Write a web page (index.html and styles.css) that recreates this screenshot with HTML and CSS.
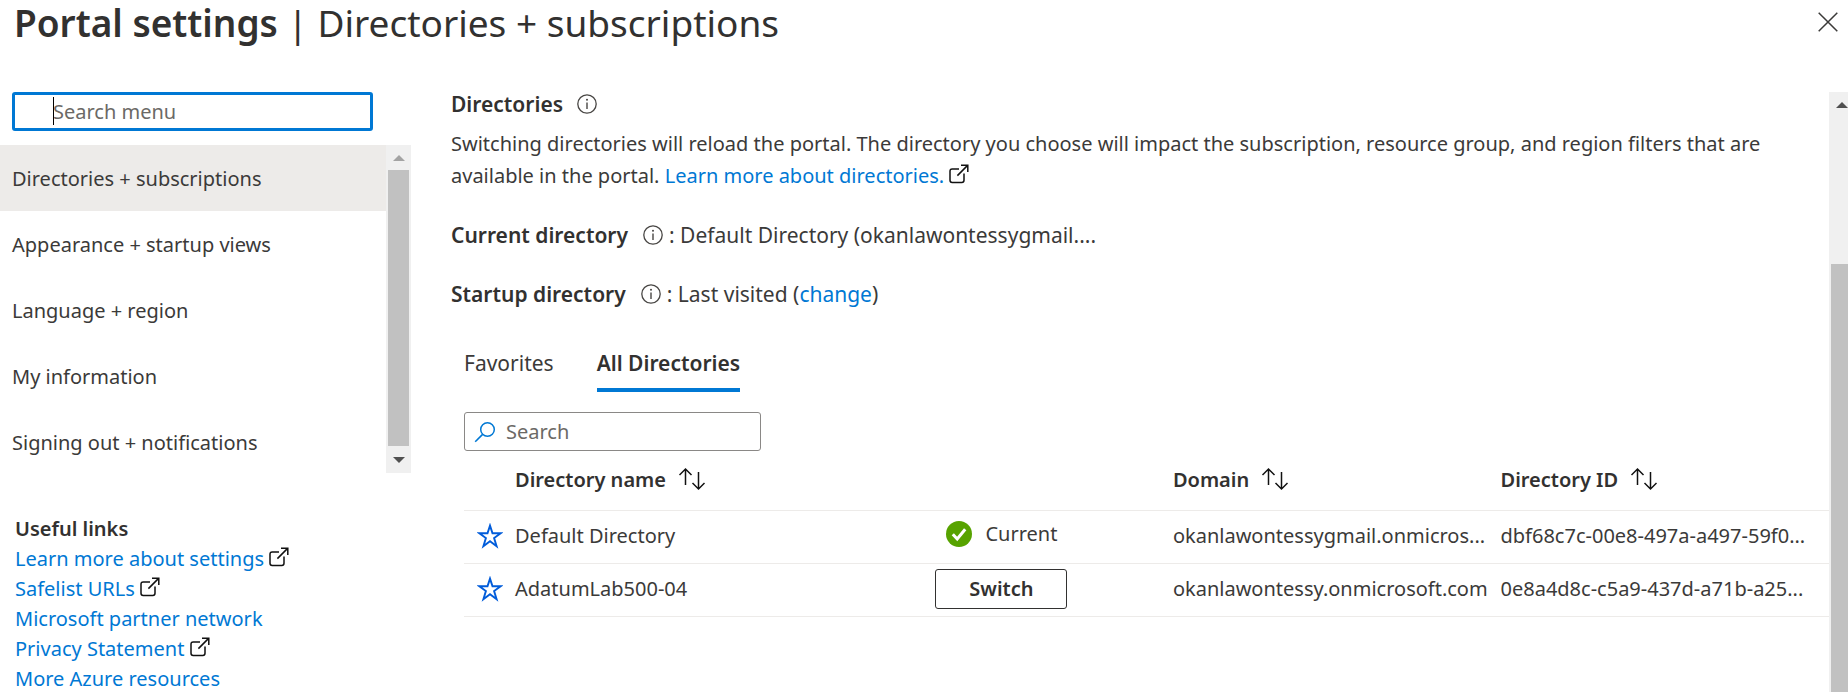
FILE: index.html
```html
<!DOCTYPE html>
<html lang="en">
<head>
<meta charset="utf-8">
<title>Portal settings</title>
<link rel="stylesheet" href="styles.css">
</head>
<body>
<svg class="sprite" aria-hidden="true">
  <symbol id="info" viewBox="0 0 20 20"><circle cx="10" cy="10" r="9.2" fill="none" stroke="currentColor" stroke-width="1.3"/><path d="M10 8.4V15" stroke="currentColor" stroke-width="1.4"/><circle cx="10" cy="5.8" r="1" fill="currentColor"/></symbol>
  <symbol id="external" viewBox="0 0 20 20"><path d="M10 5H3.2Q1 5 1 7.2V16.2Q1 18.4 3.2 18.4H12.8Q15 18.4 15 16.2V9.6M8.4 11.6L18.6 1.4M12 1.2H18.8V8" fill="none" stroke="currentColor" stroke-width="1.5"/></symbol>
  <symbol id="sort" viewBox="0 0 28 24"><path d="M7.5 18V2M1.5 8L7.5 2L13.5 8M20.5 5V22M14.5 16L20.5 22L26.500 16" fill="none" stroke="currentColor" stroke-width="1.5"/></symbol>
  <symbol id="star" viewBox="0 0 26 26"><path d="M13 2.600L15.500 10.300H23.600L17.100 15.100L19.600 23.200L13 18.300L6.400 23.200L8.900 15.100L2.400 10.300H10.500Z" fill="none" stroke="currentColor" stroke-width="1.900"/></symbol>
</svg>
<header class="header">
  <h1 class="title"><strong>Portal settings</strong> | Directories + subscriptions</h1>
  <button class="close" type="button" aria-label="Close"><svg viewBox="0 0 20 20"><path d="M.7.7L19.300 19.300M19.300.7L.7 19.300" stroke="currentColor" stroke-width="1.5"/></svg></button>
</header>
<div class="layout">
  <aside class="sidebar">
    <div class="menu-search">
      <input class="menu-input" type="text" placeholder="Search menu" aria-label="Search menu">
      <span class="caret"></span>
    </div>
    <div class="menu-wrap">
      <nav class="menu" aria-label="Settings">
        <a class="menu-item selected" href="#" aria-current="page">Directories + subscriptions</a>
        <a class="menu-item" href="#">Appearance + startup views</a>
        <a class="menu-item" href="#">Language + region</a>
        <a class="menu-item" href="#">My information</a>
        <a class="menu-item" href="#">Signing out + notifications</a>
      </nav>
      <div class="scrollbar menu-scroll" aria-hidden="true">
        <svg class="arrow faint" viewBox="0 0 12 6"><path d="M0 6L6 0L12 6Z"/></svg>
        <span class="thumb"></span>
        <svg class="arrow" viewBox="0 0 12 6"><path d="M0 0L6 6L12 0Z"/></svg>
      </div>
    </div>
    <section class="useful">
      <h2 class="useful-title">Useful links</h2>
      <ul class="links">
        <li><a href="#">Learn more about settings</a> <svg class="icon"><use href="#external"/></svg></li>
        <li><a href="#">Safelist URLs</a> <svg class="icon"><use href="#external"/></svg></li>
        <li><a href="#">Microsoft partner network</a></li>
        <li><a href="#">Privacy Statement</a> <svg class="icon"><use href="#external"/></svg></li>
        <li><a href="#">More Azure resources</a></li>
      </ul>
    </section>
  </aside>
  <main class="main">
    <h2 class="heading">Directories <svg class="icon info"><use href="#info"/></svg></h2>
    <p class="intro">Switching directories will reload the portal. The directory you choose will impact the subscription, resource group, and region filters that are available in the portal. <a href="#">Learn more about directories.</a> <svg class="icon"><use href="#external"/></svg></p>
    <p class="fact"><strong>Current directory</strong><svg class="icon info"><use href="#info"/></svg><span>: Default Directory (okanlawontessygmail....</span></p>
    <p class="fact"><strong>Startup directory</strong><svg class="icon info"><use href="#info"/></svg><span>: Last visited (<a href="#">change</a>)</span></p>
    <div class="panel">
      <div class="tabs" role="tablist">
        <button class="tab" type="button" role="tab" aria-selected="false">Favorites</button>
        <button class="tab active" type="button" role="tab" aria-selected="true">All Directories</button>
      </div>
      <label class="search">
        <svg class="lens" viewBox="0 0 22 22"><circle cx="13.500" cy="8.500" r="6.800" fill="none" stroke="currentColor" stroke-width="1.500"/><path d="M8.600 13.400L1.200 20.800" stroke="currentColor" stroke-width="1.600"/></svg>
        <input class="search-input" type="text" placeholder="Search" aria-label="Search">
      </label>
      <table class="grid">
        <colgroup><col class="c-star"><col class="c-name"><col class="c-status"><col class="c-domain"><col class="c-id"></colgroup>
        <thead>
          <tr><th></th><th>Directory name<svg class="sort"><use href="#sort"/></svg></th><th></th><th>Domain<svg class="sort"><use href="#sort"/></svg></th><th>Directory ID<svg class="sort"><use href="#sort"/></svg></th></tr>
        </thead>
        <tbody>
          <tr>
            <td><button class="fav" type="button" aria-label="Favorite Default Directory"><svg class="star"><use href="#star"/></svg></button></td>
            <td>Default Directory</td>
            <td><span class="current"><svg class="check" viewBox="0 0 26 26"><circle cx="13" cy="13" r="13" fill="#57a300"/><path d="M6.800 13.200L11.200 18L19.200 8.200" fill="none" stroke="#fff" stroke-width="3"/></svg>Current</span></td>
            <td>okanlawontessygmail.onmicros...</td>
            <td>dbf68c7c-00e8-497a-a497-59f0...</td>
          </tr>
          <tr>
            <td><button class="fav" type="button" aria-label="Favorite AdatumLab500-04"><svg class="star"><use href="#star"/></svg></button></td>
            <td>AdatumLab500-04</td>
            <td><button class="switch" type="button">Switch</button></td>
            <td>okanlawontessy.onmicrosoft.com</td>
            <td>0e8a4d8c-c5a9-437d-a71b-a25...</td>
          </tr>
        </tbody>
      </table>
    </div>
  </main>
  <div class="scrollbar page-scroll" aria-hidden="true">
    <svg class="arrow" viewBox="0 0 12 6"><path d="M0 6L6 0L12 6Z"/></svg>
    <span class="thumb"></span>
  </div>
</div>
</body>
</html>
```
FILE: styles.css
```css
* { box-sizing: border-box; }

body {
  margin: 0;
  height: 100vh;
  overflow: hidden;
  display: flex;
  flex-direction: column;
  background: #fff;
  color: #3b3a39;
  font-family: "Segoe UI", "Noto Sans", "Open Sans", sans-serif;
  font-size: 20px;
  line-height: 30px;
}

h1, h2, p, ul { margin: 0; padding: 0; }
ul { list-style: none; }
a { color: #0078d4; text-decoration: none; }
h1, h2, th, strong { color: #323130; }
strong, h2, th { font-weight: 600; }
button, input { font: inherit; color: inherit; }
button { padding: 0; border: 0; background: none; }
input::placeholder { color: #6b6966; opacity: 1; }

.sprite { position: absolute; width: 0; height: 0; }
.icon { width: 20px; height: 20px; color: #111; }
.info { color: #484644; }

.header {
  display: flex;
  justify-content: space-between;
  align-items: flex-start;
  height: 92px;
  padding-right: 10px;
  padding-left: 14px;
  flex: none;
}
.title { font-size: 37px; font-weight: 400; line-height: 46px; white-space: nowrap; }
.close { margin-top: 12px; }
.close svg { display: block; width: 20px; height: 20px; }

.layout { display: flex; flex: 1; min-height: 0; }

.sidebar { width: 411px; flex: none; }
.menu-search { position: relative; margin: 0 38px 14px 12px; }
.menu-input {
  display: block;
  width: 100%;
  height: 39px;
  padding: 0 8px 0 38px;
  border: 3px solid #0078d4;
  border-radius: 3px;
  outline: 0;
}
.caret { position: absolute; top: 5px; left: 41px; width: 1px; height: 28px; background: #000; }

.menu-wrap { display: flex; height: 328px; overflow: hidden; }
.menu { flex: 1; }
.menu-item { display: block; padding: 19px 12px 17px; color: #3b3a39; }
.selected { background: #edebe9; }

.scrollbar {
  display: flex;
  flex-direction: column;
  align-items: center;
  flex: none;
  background: #f0f0f0;
}
.thumb { flex: 1; align-self: stretch; margin: 0 2px; background: #c1c1c1; }
.arrow { width: 12px; height: 6px; margin: 10px 0 9px; fill: #505050; }
.faint { fill: #a3a3a3; }
.menu-scroll { width: 25px; }
.menu-scroll .arrow:last-child { margin: 11px 0 10px; }
.page-scroll { width: 19px; overflow: hidden; align-items: flex-end; }
.page-scroll .arrow { margin-bottom: 156px; }
.page-scroll .thumb { margin-right: 0; }

.useful { padding: 41px 15px 0; white-space: nowrap; }
.useful-title { font-size: 20px; line-height: 30px; }
.links .icon { vertical-align: -1px; }

.main { flex: 1; min-width: 0; padding-left: 40px; }
.heading { display: flex; align-items: center; gap: 14px; height: 24px; margin-bottom: 12px; font-size: 21px; }
.intro { padding-right: 50px; line-height: 32px; }
.intro .icon { vertical-align: -1px; }
.fact { display: flex; align-items: center; margin-top: 27px; font-size: 21px; line-height: 32px; white-space: nowrap; }
.fact .info { margin: 0 6px 0 15px; }

.panel { padding: 37px 0 0 13px; }
.tabs { display: flex; gap: 43px; margin-bottom: 20px; }
.tab { height: 45px; padding-bottom: 10px; border-bottom: 4px solid transparent; font-size: 21px; }
.active { border-color: #0078d4; color: #323130; font-weight: 600; }

.search {
  display: flex;
  align-items: center;
  gap: 10px;
  width: 297px;
  height: 39px;
  padding: 0 9px;
  border: 1px solid #8a8886;
  border-radius: 3px;
}
.lens { width: 22px; height: 22px; flex: none; color: #0078d4; }
.search-input { width: 100%; min-width: 0; padding: 0; border: 0; outline: 0; }

.grid { width: 100%; table-layout: fixed; border-collapse: collapse; text-align: left; white-space: nowrap; }
.c-star { width: 51px; }
.c-name { width: 30.8%; }
.c-status { width: 17.4%; }
.c-domain { width: 24%; }
th, td { padding: 0; border-bottom: 1px solid #edebe9; }
th { height: 59px; }
td { height: 53px; padding-bottom: 2px; }
.sort { width: 28px; height: 24px; margin-left: 12px; vertical-align: -4px; color: #111; }
.fav { display: block; margin-left: 13px; color: #015cda; }
.star { display: block; width: 26px; height: 26px; }
.current { display: flex; align-items: center; gap: 13px; padding: 0 0 4px 11px; }
.check { width: 26px; height: 26px; }
.switch { display: block; width: 132px; height: 40px; border: 1px solid #323130; border-radius: 3px; color: #323130; font-weight: 600; }
```
